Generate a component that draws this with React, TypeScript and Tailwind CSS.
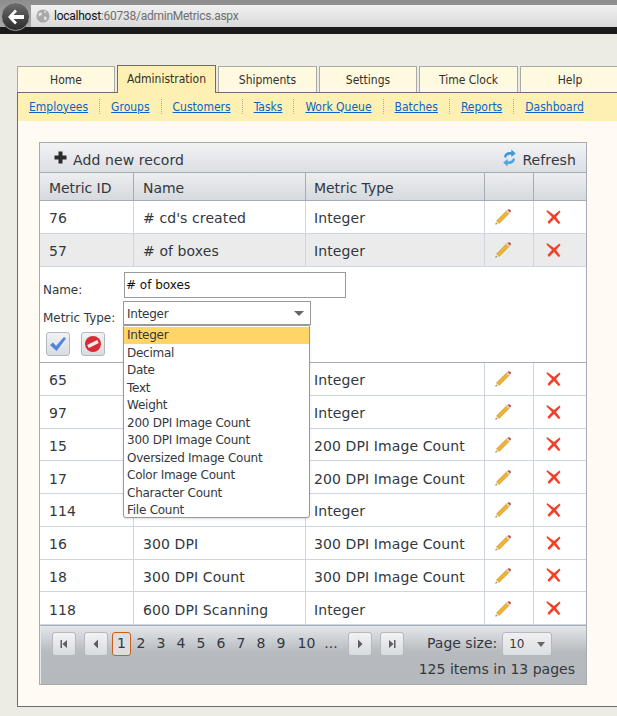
import React from 'react';

const tabs = ['Home', 'Administration', 'Shipments', 'Settings', 'Time Clock', 'Help'];
const tabWidths = ['w-[98px]', 'w-[99px]', 'w-[99px]', 'w-[98px]', 'w-[99px]', 'w-[100px]'];
const links = ['Employees', 'Groups', 'Customers', 'Tasks', 'Work Queue', 'Batches', 'Reports', 'Dashboard'];
const options = ['Integer', 'Decimal', 'Date', 'Text', 'Weight', '200 DPI Image Count', '300 DPI Image Count', 'Oversized Image Count', 'Color Image Count', 'Character Count', 'File Count'];
const rowsBelow = [
  ['65', '', 'Integer'],
  ['97', '', 'Integer'],
  ['15', '', '200 DPI Image Count'],
  ['17', '', '200 DPI Image Count'],
  ['114', '', 'Integer'],
  ['16', '300 DPI', '300 DPI Image Count'],
  ['18', '300 DPI Count', '300 DPI Image Count'],
  ['118', '600 DPI Scanning', 'Integer'],
];
const pages = ['1', '2', '3', '4', '5', '6', '7', '8', '9', '10', '...'];

const PencilIcon = () => (
  <svg width="18" height="18" viewBox="0 0 18 18" className="mt-[1px]">
    <path d="M13 2.5 L15.5 5 L5 15.5 L2.5 13 Z" fill="#efb52e" stroke="#b97f1c" strokeWidth="0.6" />
    <path d="M12.2 3.3 L14.7 5.8 L15.8 4.7 L13.3 2.2 Z" fill="#d8d8d0" />
    <path d="M13.6 1.9 L16.1 4.4 L16.8 3.4 C17.2 2.4 15.6 0.8 14.6 1.2 Z" fill="#c9343a" />
    <path d="M2.5 13 L5 15.5 L1.5 16.5 Z" fill="#f2dfb8" />
    <path d="M1.9 15 L3 16.1 L1.5 16.5 Z" fill="#333" />
  </svg>
);

const DeleteIcon = () => (
  <svg width="16" height="16" viewBox="0 0 16 16">
    <path d="M1 1 L8 6 L13.5 1.5 L14.5 3 L10 8 L14.5 14 L12.5 15 L8 10 L3 15 L1.5 13 L6 8 L0.5 2.5 Z" fill="#f2412a" />
  </svg>
);

const Arrow = ({ dir }: { dir: 'first' | 'prev' | 'next' | 'last' }) => (
  <svg width="10" height="10" viewBox="0 0 10 10" fill="#5a5f66">
    {dir === 'first' && <path d="M1.5 1 H3 V9 H1.5 Z M8 1 V9 L3.5 5 Z" />}
    {dir === 'prev' && <path d="M7 0.5 V9.5 L2.5 5 Z" />}
    {dir === 'next' && <path d="M3 0.5 V9.5 L7.5 5 Z" />}
    {dir === 'last' && <path d="M8.5 1 H7 V9 H8.5 Z M2 1 V9 L6.5 5 Z" />}
  </svg>
);

const PagerButton = ({ dir }: { dir: 'first' | 'prev' | 'next' | 'last' }) => (
  <span className="w-[24px] h-[24px] flex items-center justify-center rounded-[3px] border border-[#b4b9c0] bg-gradient-to-b from-[#f1f2f4] to-[#d9dcdf]">
    <Arrow dir={dir} />
  </span>
);

const Row = ({ id, name, type, selected }: { id: string; name: string; type: string; selected?: boolean }) => (
  <div className={`flex h-[32.75px] shrink-0 border-b border-[#cdd6e2] items-stretch tracking-[0.1px] ${selected ? 'bg-[#ebebeb]' : 'bg-white'}`}>
    <div className="w-[94px] pl-[9px] pt-[4px] flex items-center border-r border-[#cdd6e2]">{id}</div>
    <div className="w-[172px] pl-[9px] pt-[4px] flex items-center border-r border-[#cdd6e2]">{name}</div>
    <div className="w-[179px] pl-[8px] pt-[4px] flex items-center border-r border-[#cdd6e2]">{type}</div>
    <div className="w-[49px] pl-[9px] flex items-center border-r border-[#cdd6e2]"><PencilIcon /></div>
    <div className="flex-1 pl-[12px] flex items-center"><DeleteIcon /></div>
  </div>
);

export default function App() {
  return (
    <div className="h-[716px] w-[617px] overflow-hidden bg-[#ecebe4] font-['Liberation_Sans',sans-serif]">
      {/* browser chrome */}
      <div className="h-[34px] relative bg-gradient-to-b from-[#8d8d8d] to-[#a9a9a9] border-b-[7px] border-[#1b1b1b] pl-[31px] pt-[5px]">
        <div className="h-[22px] bg-gradient-to-b from-[#f1f1f1] to-[#d9d9d9] flex items-center pl-[5px] gap-[4px] text-[12px] tracking-[-0.25px] font-['Roboto',sans-serif]">
          <svg width="14" height="14" viewBox="0 0 16 16">
            <circle cx="8" cy="8" r="7.5" fill="#a8a8a8" />
            <path d="M3 5 C5 3 7 4 7 6 C6 8 4 7 3 9 Z M9 9 C11 8 13 9 12 12 C10 14 9 12 9 9 Z M9 2 L12 3 L10 5 Z" fill="#e2e2e2" />
          </svg>
          <span>
            <span className="text-[#111]">localhost</span>
            <span className="text-[#6f6f6f]">:60738/adminMetrics.aspx</span>
          </span>
        </div>
        <div className="absolute left-[1px] top-[2px] w-[29px] h-[29px] rounded-full bg-gradient-to-b from-[#6e6e6e] to-[#2c2c2c] border border-[#9a9a9a] flex items-center justify-center">
          <svg width="20" height="18" viewBox="0 0 20 18">
            <path d="M9 1.5 L2 9 L9 16.5 L11 14.5 L7.5 11 H18 V7 H7.5 L11 3.5 Z" fill="#fff" />
          </svg>
        </div>
      </div>

      {/* page panel */}
      <div className="mt-[32px] ml-[17px] h-[640px]">
        <div className="flex gap-[2px] h-[26px] relative z-10 text-[12px] font-['DejaVu_Sans_Condensed','DejaVu_Sans',sans-serif] text-[#33302a]">
          {tabs.map((t, i) => (
            <div
              key={t}
              className={`${tabWidths[i]} shrink-0 flex items-center justify-center border border-b-0 ${
                t === 'Administration'
                  ? 'bg-[#fef0b3] border-[#6d6d6d] h-[28px] -mt-[1px] pb-[1px]'
                  : 'bg-[#fff9e0] border-[#a9a9a5] h-[26px] pt-[1px]'
              }`}
            >
              {t}
            </div>
          ))}
        </div>
        <div className="h-[615px] border-t border-l border-b border-[#6d6d6d] bg-[#fffbf3]">
          <div className="h-[28px] pb-[1px] bg-[#fef0b3] flex items-center pl-[11px] text-[12px] font-['DejaVu_Sans_Condensed','DejaVu_Sans',sans-serif]">
            {links.map((l, i) => (
              <React.Fragment key={l}>
                {i > 0 && <span className="mx-[11px] h-[15px] border-l border-dotted border-[#b3ab8a]" />}
                <a href="#" className="text-[#0b63c9] underline">{l}</a>
              </React.Fragment>
            ))}
          </div>

          {/* grid */}
          <div className="ml-[21px] mt-[21px] w-[548px] h-[543px] border border-[#a6acb5] relative text-[14px] font-['DejaVu_Sans',sans-serif] text-[#33383f] flex flex-col">
            <div className="h-[30px] shrink-0 bg-gradient-to-b from-[#f2f3f5] to-[#dcdfe3] border-b border-[#a6acb5] flex items-center pl-[14px] pr-[10px] tracking-[0.1px]">
              <svg width="13" height="13" viewBox="0 0 13 13"><path d="M4.5 0.5 H8.5 V4.5 H12.5 V8.5 H8.5 V12.5 H4.5 V8.5 H0.5 V4.5 H4.5 Z" fill="#2b2b2b" /></svg>
              <span className="ml-[6px] mt-[6px]">Add new record</span>
              <svg width="15" height="18" viewBox="0 0 16 20" className="ml-auto">
                <path d="M2 9 C2 5 6 3 10 3.5 L10 0.5 L15 5 L10 9 L10 6.5 C7 6 5 7 4 10 Z" fill="#3d9bd6" />
                <path d="M14 11 C14 15 10 17 6 16.5 L6 19.5 L1 15 L6 11 L6 13.5 C9 14 11 13 12 10 Z" fill="#4aa7e0" />
              </svg>
              <span className="ml-[5px] mt-[6px]">Refresh</span>
            </div>
            <div className="h-[28px] shrink-0 flex bg-gradient-to-b from-[#eceef0] to-[#d6d9dd] border-b border-[#a6acb5] tracking-[-0.05px]">
              <div className="w-[94px] pl-[9px] pt-[4px] flex items-center border-r border-[#a6acb5]">Metric ID</div>
              <div className="w-[172px] pl-[9px] pt-[4px] flex items-center border-r border-[#a6acb5]">Name</div>
              <div className="w-[179px] pl-[8px] pt-[4px] flex items-center border-r border-[#a6acb5]">Metric Type</div>
              <div className="w-[49px] border-r border-[#a6acb5]" />
              <div className="flex-1" />
            </div>
            <Row id="76" name="# cd's created" type="Integer" />
            <Row id="57" name="# of boxes" type="Integer" selected />

            {/* edit form */}
            <div className="h-[96.5px] shrink-0 bg-white border-b border-[#a6acb5] relative text-[12px]">
              <div className="flex items-center pt-[5px] pl-[3px]">
                <span className="w-[81px] self-end -mb-[1px] tracking-[-0.05px]">Name:</span>
                <div className="w-[222px] h-[26px] border border-[#9a9a9a] flex items-center pl-[1px] text-[#111]">
                  # of boxes
                </div>
              </div>
              <div className="flex items-center pt-[3px] pl-[3px]">
                <span className="w-[80px] self-end -mb-[2px] tracking-[-0.05px]">Metric Type:</span>
                <div className="w-[188px] h-[24px] pt-[2px] border border-[#9a9a9a] flex items-center pl-[3px] pr-[4px] justify-between tracking-[-0.25px]">
                  Integer
                  <span className="w-0 h-0 mr-[2px] border-x-[5px] border-x-transparent border-t-[5px] border-t-[#666]" />
                </div>
              </div>
              <div className="flex gap-[11px] pl-[6px] pt-[7px]">
                <span className="w-[24px] h-[24px] rounded-[3px] border border-[#b4b9c0] bg-gradient-to-b from-[#f1f2f4] to-[#d9dcdf] flex items-center justify-center">
                  <svg width="18" height="16" viewBox="0 0 18 16"><path d="M1 9 L4 6.5 L7 10 L15 1 L17 2.5 L7.5 15 Z" fill="#4f83e0" /></svg>
                </span>
                <span className="w-[24px] h-[24px] rounded-[3px] border border-[#b4b9c0] bg-gradient-to-b from-[#f1f2f4] to-[#d9dcdf] flex items-center justify-center">
                  <svg width="18" height="18" viewBox="0 0 18 18">
                    <circle cx="9" cy="9" r="8" fill="#d92b35" />
                    <path d="M4 11.5 L14 6.5" stroke="#f6eeee" strokeWidth="3.5" />
                  </svg>
                </span>
              </div>
            </div>

            {rowsBelow.map((r) => (
              <Row key={r[0]} id={r[0]} name={r[1]} type={r[2]} />
            ))}

            {/* pager */}
            <div className="flex-1 border-t border-l border-[#a6acb5] border-l-[#e6e9ec] bg-gradient-to-b from-[#e4e7ea] via-[#b7bbbf] via-45% to-[#b5b9bd] pl-[11px] pr-[11px] pt-[6px]">
              <div className="flex items-center h-[24px]">
                <PagerButton dir="first" />
                <span className="w-[8px]" />
                <PagerButton dir="prev" />
                <div className="flex items-center ml-[4px]">
                  {pages.map((p, i) => (
                    <span
                      key={p}
                      className={`h-[24px] pb-[1px] flex items-center justify-center ${
                        i === 0
                          ? 'w-[19px] border border-[#c8601a] rounded-[3px] bg-[#dcdee0]'
                          : p === '10'
                            ? 'w-[25px] ml-[3px] mr-[2px]'
                            : 'w-[20px]'
                      }`}
                    >
                      {p}
                    </span>
                  ))}
                </div>
                <span className="w-[7px]" />
                <PagerButton dir="next" />
                <span className="w-[8px]" />
                <PagerButton dir="last" />
                <span className="ml-[23px] pb-[1px]">Page size:</span>
                <div className="ml-[5px] w-[50px] h-[24px] rounded-[3px] border border-[#b4b9c0] bg-gradient-to-b from-[#eff0f2] to-[#dcdfe2] flex items-center justify-between pl-[6px] pr-[6px] text-[12px]">
                  10
                  <span className="w-0 h-0 border-x-[4px] border-x-transparent border-t-[5px] border-t-[#666]" />
                </div>
              </div>
              <div className="text-right mt-[3px]">125 items in 13 pages</div>
            </div>

            {/* dropdown list */}
            <div className="absolute left-[83px] top-[182px] w-[187px] h-[193px] pt-[0.5px] bg-white border border-[#9a9a9a] rounded-b-[3px] text-[12px] tracking-[-0.25px] z-10 shadow-sm">
              {options.map((o, i) => (
                <div key={o} className={`h-[17.5px] pl-[3px] flex items-center ${i === 0 ? 'bg-[#fed566]' : ''}`}>{o}</div>
              ))}
            </div>
          </div>
        </div>
      </div>
    </div>
  );
}
